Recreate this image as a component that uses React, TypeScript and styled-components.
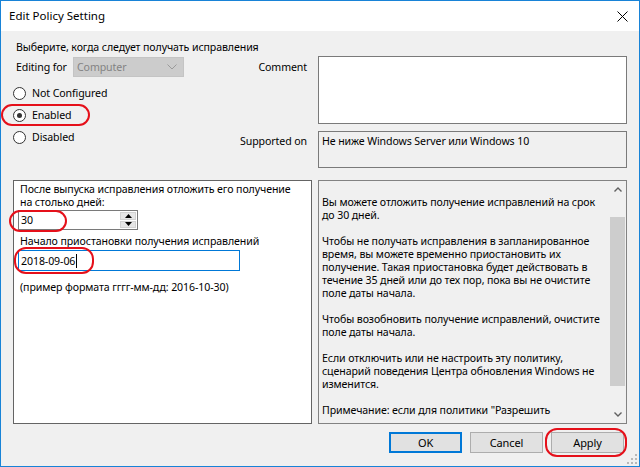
import styled, { createGlobalStyle } from "styled-components";

const GlobalStyle = createGlobalStyle`
  html, body {
    margin: 0;
    padding: 0;
    background: #ffffff;
  }
  body {
    font-family: "Noto Sans", "Liberation Sans", sans-serif;
    font-size: 10.6px;
    letter-spacing: -0.1px;
    color: #000;
  }
  * {
    box-sizing: border-box;
  }
`;

const helpParagraphs = [
  ["Вы можете отложить получение исправлений на срок", "до 30 дней."],
  [
    "Чтобы не получать исправления в запланированное",
    "время, вы можете временно приостановить их",
    "получение. Такая приостановка будет действовать в",
    "течение 35 дней или до тех пор, пока вы не очистите",
    "поле даты начала.",
  ],
  ["Чтобы возобновить получение исправлений, очистите", "поле даты начала."],
  [
    "Если отключить или не настроить эту политику,",
    "сценарий поведения Центра обновления Windows не",
    "изменится.",
  ],
  ["Примечание: если для политики \"Разрешить"],
];

const radios = [
  { label: "Not Configured", checked: false },
  { label: "Enabled", checked: true },
  { label: "Disabled", checked: false },
];

export default function App() {
  return (
    <>
      <GlobalStyle />
      <Window>
        <TitleBar>
          <Title>Edit Policy Setting</Title>
          <svg width="11" height="11" viewBox="0 0 11 11">
            <path d="M0.5 0.5 L10.5 10.5 M10.5 0.5 L0.5 10.5" stroke="#000" strokeWidth="1" />
          </svg>
        </TitleBar>

        <Body>
          <TopGrid>
            <Heading>Выберите, когда следует получать исправления</Heading>
            <LeftCell>
              <EditingRow>
                <FieldLabel>Editing for</FieldLabel>
                <Select>
                  <span>Computer</span>
                  <svg width="10" height="6" viewBox="0 0 10 6">
                    <polyline points="0.5,0.5 5,5 9.5,0.5" fill="none" stroke="#9a9a9a" strokeWidth="1" />
                  </svg>
                </Select>
                <SideLabel>Comment</SideLabel>
              </EditingRow>
              <StateRow>
                <RadioGroup>
                  {radios.map((r) => (
                    <RadioItem key={r.label}>
                      <RadioCircle $checked={r.checked} />
                      {r.label}
                      {r.checked && <Marker $left={-12} $top={0} $w={89} $h={22} />}
                    </RadioItem>
                  ))}
                </RadioGroup>
                <SideLabel $bottom>Supported on</SideLabel>
              </StateRow>
            </LeftCell>
            <RightCell>
              <CommentBox />
              <SupportedBox>Не ниже Windows Server или Windows 10</SupportedBox>
            </RightCell>
          </TopGrid>

          <PanelsGrid>
            <OptionsPanel>
              <OptionLabel>
                После выпуска исправления отложить его получение
                <br />
                на столько дней:
              </OptionLabel>
              <SpinBox>
                <SpinValue>30</SpinValue>
                <SpinButtons>
                  <SpinButton>
                    <svg width="7" height="4" viewBox="0 0 7 4">
                      <polygon points="3.5,0 7,4 0,4" fill="#000" />
                    </svg>
                  </SpinButton>
                  <SpinButton>
                    <svg width="7" height="4" viewBox="0 0 7 4">
                      <polygon points="0,0 7,0 3.5,4" fill="#000" />
                    </svg>
                  </SpinButton>
                </SpinButtons>
                <Marker $left={-10} $top={-1} $w={58} $h={22} />
              </SpinBox>
              <OptionLabel $gap={5}>Начало приостановки получения исправлений</OptionLabel>
              <DateInput>
                2018-09-06
                <Caret />
                <Marker $left={-5} $top={-4} $w={80} $h={27} />
              </DateInput>
              <OptionLabel $gap={10}>(пример формата гггг-мм-дд: 2016-10-30)</OptionLabel>
            </OptionsPanel>

            <HelpPanel>
              <HelpText>
                {helpParagraphs.map((p, i) => (
                  <HelpParagraph key={i}>
                    {p.map((line) => (
                      <div key={line}>{line}</div>
                    ))}
                  </HelpParagraph>
                ))}
              </HelpText>
              <Scrollbar>
                <ScrollArrow>
                  <svg width="8" height="5" viewBox="0 0 8 5">
                    <polyline points="0.5,4.5 4,1 7.5,4.5" fill="none" stroke="#606060" strokeWidth="1.4" />
                  </svg>
                </ScrollArrow>
                <ScrollTrack>
                  <ScrollThumb />
                </ScrollTrack>
                <ScrollArrow>
                  <svg width="8" height="5" viewBox="0 0 8 5">
                    <polyline points="0.5,0.5 4,4 7.5,0.5" fill="none" stroke="#606060" strokeWidth="1.4" />
                  </svg>
                </ScrollArrow>
              </Scrollbar>
            </HelpPanel>
          </PanelsGrid>

          <ButtonRow>
            <Button $default>OK</Button>
            <Button>Cancel</Button>
            <Button>
              Apply
              <Marker $left={-7} $top={-5} $w={82} $h={29} />
            </Button>
          </ButtonRow>
        </Body>

        <Grip width="12" height="12" viewBox="0 0 12 12">
          {[
            [10, 2],
            [10, 6],
            [6, 6],
            [10, 10],
            [6, 10],
            [2, 10],
          ].map(([x, y]) => (
            <rect key={`${x}-${y}`} x={x - 1} y={y - 1} width="2" height="2" fill="#b8b8b8" />
          ))}
        </Grip>
      </Window>
    </>
  );
}

const Window = styled.div`
  position: relative;
  width: 640px;
  height: 467px;
  border: 1px solid #1883d7;
  background: #f0f0f0;
  display: flex;
  flex-direction: column;
  overflow: hidden;
`;

const TitleBar = styled.div`
  height: 30px;
  flex-shrink: 0;
  background: #ffffff;
  display: flex;
  align-items: center;
  justify-content: space-between;
  padding: 0 11px 0 8px;
`;

const Title = styled.span`
  font-size: 11.5px;
  letter-spacing: 0;
  line-height: 14px;
`;

const Body = styled.div`
  display: flex;
  flex-direction: column;
  padding: 9px 12px 0 12px;
`;

const TopGrid = styled.div`
  display: grid;
  grid-template-columns: 299px 309px;
  column-gap: 6px;
`;

const Heading = styled.div`
  grid-column: 1;
  padding-left: 3px;
  line-height: 14px;
  white-space: nowrap;
`;

const LeftCell = styled.div`
  grid-column: 1;
  padding-top: 3px;
  display: flex;
  flex-direction: column;
`;

const RightCell = styled.div`
  grid-column: 2;
  grid-row: 2;
  padding-top: 2px;
  display: flex;
  flex-direction: column;
  gap: 7px;
`;

const EditingRow = styled.div`
  height: 20px;
  display: flex;
  align-items: center;
`;

const FieldLabel = styled.span`
  width: 60px;
  padding-left: 3px;
  white-space: nowrap;
`;

const Select = styled.div`
  width: 111px;
  height: 20px;
  background: #cccccc;
  border: 1px solid #c4c4c4;
  color: #838383;
  display: flex;
  align-items: center;
  justify-content: space-between;
  padding: 0 6px 0 3px;
`;

const SideLabel = styled.span<{ $bottom?: boolean }>`
  margin-left: auto;
  padding-right: 5px;
  line-height: 14px;
  white-space: nowrap;
  align-self: ${(p) => (p.$bottom ? "flex-end" : "center")};
  margin-bottom: ${(p) => (p.$bottom ? "0" : "0")};
`;

const StateRow = styled.div`
  display: flex;
  margin-top: 5px;
`;

const RadioGroup = styled.div`
  display: flex;
  flex-direction: column;
`;

const RadioItem = styled.label`
  position: relative;
  height: 22px;
  display: flex;
  align-items: center;
  gap: 6px;
  white-space: nowrap;
`;

const RadioCircle = styled.span<{ $checked: boolean }>`
  width: 13px;
  height: 13px;
  border-radius: 50%;
  border: 1px solid #333333;
  background: #ffffff;
  display: flex;
  align-items: center;
  justify-content: center;

  &::after {
    content: "";
    display: ${(p) => (p.$checked ? "block" : "none")};
    width: 5px;
    height: 5px;
    border-radius: 50%;
    background: #333333;
  }
`;

const Marker = styled.span<{ $left: number; $top: number; $w: number; $h: number }>`
  position: absolute;
  left: ${(p) => p.$left}px;
  top: ${(p) => p.$top}px;
  width: ${(p) => p.$w}px;
  height: ${(p) => p.$h}px;
  border: 2px solid #e5101a;
  border-radius: 12px;
  pointer-events: none;
`;

const CommentBox = styled.div`
  height: 68px;
  background: #ffffff;
  border: 1px solid #7a7a7a;
`;

const SupportedBox = styled.div`
  height: 37px;
  border: 1px solid #7a7a7a;
  padding: 2px 3px;
  line-height: 14px;
  white-space: nowrap;
`;

const PanelsGrid = styled.div`
  display: grid;
  grid-template-columns: 299px 309px;
  column-gap: 6px;
  height: 244px;
  margin-top: 12px;
`;

const OptionsPanel = styled.div`
  background: #ffffff;
  border: 1px solid #646464;
  padding: 2px 4px 0 4px;
  display: flex;
  flex-direction: column;
  align-items: flex-start;
`;

const OptionLabel = styled.div<{ $gap?: number }>`
  margin-top: ${(p) => p.$gap ?? 0}px;
  padding-left: 2px;
  line-height: 13px;
  white-space: nowrap;
`;

const SpinBox = styled.div`
  position: relative;
  margin-top: 1px;
  width: 120px;
  height: 20px;
  border: 1px solid #7a7a7a;
  display: flex;
`;

const SpinValue = styled.span`
  flex: 1;
  padding-left: 2px;
  line-height: 18px;
`;

const SpinButtons = styled.div`
  width: 17px;
  display: flex;
  flex-direction: column;
  gap: 1px;
  padding: 1px 1px 1px 0;
`;

const SpinButton = styled.div`
  flex: 1;
  background: #e6e6e6;
  border: 1px solid #d2d2d2;
  display: flex;
  align-items: center;
  justify-content: center;
`;

const DateInput = styled.div`
  position: relative;
  margin-top: 2px;
  width: 222px;
  height: 21px;
  border: 1px solid #0078d7;
  padding-left: 2px;
  display: flex;
  align-items: center;
`;

const Caret = styled.span`
  width: 1px;
  height: 14px;
  background: #000;
  margin-left: 1px;
`;

const HelpPanel = styled.div`
  border: 1px solid #828282;
  display: flex;
  overflow: hidden;
`;

const HelpText = styled.div`
  flex: 1;
  padding: 15px 0 0 3px;
  line-height: 13px;
  white-space: nowrap;
  overflow: hidden;
`;

const HelpParagraph = styled.div`
  margin-bottom: 13px;
`;

const Scrollbar = styled.div`
  width: 17px;
  display: flex;
  flex-direction: column;
`;

const ScrollArrow = styled.div`
  height: 17px;
  display: flex;
  align-items: center;
  justify-content: center;
`;

const ScrollTrack = styled.div`
  flex: 1;
  padding: 19px 1px 0 1px;
`;

const ScrollThumb = styled.div`
  height: 169px;
  background: #cdcdcd;
`;

const ButtonRow = styled.div`
  display: flex;
  justify-content: flex-end;
  gap: 8px;
  margin-top: 8px;
  padding-right: 3px;
`;

const Button = styled.div<{ $default?: boolean }>`
  position: relative;
  width: 73px;
  height: 21px;
  background: #e1e1e1;
  border: 1px solid ${(p) => (p.$default ? "#0078d7" : "#adadad")};
  box-shadow: ${(p) => (p.$default ? "inset 0 0 0 1px #0078d7" : "none")};
  font-size: 11px;
  display: flex;
  align-items: center;
  justify-content: center;
`;

const Grip = styled.svg`
  position: absolute;
  right: 1px;
  bottom: 1px;
`;
